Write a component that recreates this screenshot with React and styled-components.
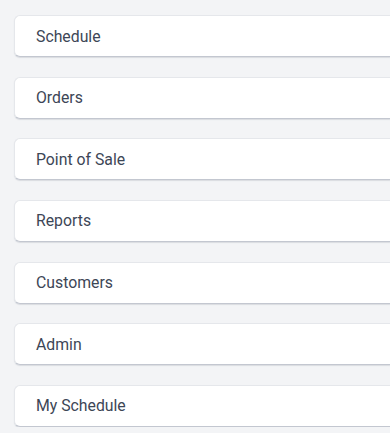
import React from 'react';
import styled, { createGlobalStyle } from 'styled-components';

const GlobalStyle = createGlobalStyle`
  html, body {
    margin: 0;
    padding: 0;
    background: #f3f4f6;
  }
  body {
    font-family: Roboto, "Liberation Sans", sans-serif;
  }
`;

const Menu = styled.div`
  display: flex;
  flex-direction: column;
  gap: 19.67px;
  padding: 15px 0 0 14px;
`;

// cards run off the right side of the frame, so no right edge is drawn
const MenuItem = styled.div`
  box-sizing: border-box;
  height: 42px;
  display: flex;
  align-items: center;
  padding-left: 21px;
  background: #ffffff;
  border: 1px solid #e5e7eb;
  border-right: none;
  border-bottom-color: #c3c7d0;
  border-radius: 6px 0 0 6px;
  box-shadow: 0 1px 1px rgba(100, 110, 130, 0.18);
  color: #3d4656;
  font-size: 15.8px;
  cursor: pointer;
`;

const items = [
  'Schedule',
  'Orders',
  'Point of Sale',
  'Reports',
  'Customers',
  'Admin',
  'My Schedule',
];

const App = () => {
  return (
    <>
      <GlobalStyle />
      <Menu>
        {items.map(label => (
          <MenuItem key={label}>{label}</MenuItem>
        ))}
      </Menu>
    </>
  );
};

export default App;
